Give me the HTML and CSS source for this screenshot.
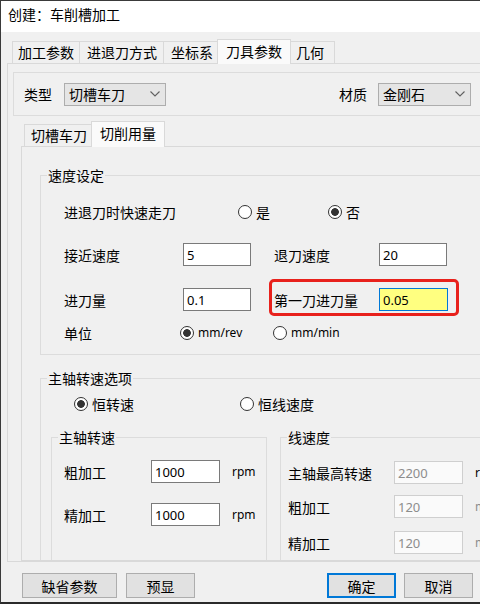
FILE: index.html
```html
<!DOCTYPE html>
<html lang="zh-CN">
<head>
  <meta charset="UTF-8" />
  <meta name="viewport" content="width=device-width, initial-scale=1.0"/>
  <title>创建：车削槽加工</title>
  <link rel="stylesheet" href="styles.css">
</head>
<body>

  <div class="window">
    <div class="titlebar">创建：车削槽加工</div>

    <div class="client">

      <!-- 主选项卡 -->
      <div class="tabs main-tabs">
        <div class="tab">加工参数</div>
        <div class="tab wide-tab">进退刀方式</div>
        <div class="tab wide-tab">坐标系</div>
        <div class="tab active">刀具参数</div>
        <div class="tab last">几何</div>
      </div>

      <div class="tabpage">

        <div class="toolrow">
          <span class="lbl type-lbl">类型</span>
          <div class="combo type-combo">
            <span>切槽车刀</span>
            <svg width="10" height="6" viewBox="0 0 10 6"><path d="M0.5 0.5 L5 5 L9.5 0.5" fill="none" stroke="#606060" stroke-width="1.1"/></svg>
          </div>
          <span class="lbl mat-lbl">材质</span>
          <div class="combo mat-combo">
            <span>金刚石</span>
            <svg width="10" height="6" viewBox="0 0 10 6"><path d="M0.5 0.5 L5 5 L9.5 0.5" fill="none" stroke="#606060" stroke-width="1.1"/></svg>
          </div>
        </div>

        <!-- 刀具子选项卡 -->
        <div class="tabs sub-tabs">
          <div class="tab">切槽车刀</div>
          <div class="tab active">切削用量</div>
        </div>

        <div class="subpage">

          <fieldset class="group speed">
            <legend>速度设定</legend>
            <div class="row quick">
              <span class="cell quick-lbl">进退刀时快速走刀</span>
              <label class="radio yes"><i></i>是</label>
              <label class="radio on"><i></i>否</label>
            </div>
            <div class="row feed">
              <span class="cell c1">接近速度</span>
              <input class="edit" type="text" value="5">
              <span class="cell c3">退刀速度</span>
              <input class="edit" type="text" value="20">
            </div>
            <div class="row feed second">
              <span class="cell c1">进刀量</span>
              <input class="edit" type="text" value="0.1">
              <span class="mark">
                <span class="cell c3">第一刀进刀量</span>
                <input class="edit focus" type="text" value="0.05">
              </span>
            </div>
            <div class="row unit">
              <span class="cell c1">单位</span>
              <label class="radio on rev"><i></i>mm/rev</label>
              <label class="radio"><i></i>mm/min</label>
            </div>
          </fieldset>

          <fieldset class="group spindle">
            <legend>主轴转速选项</legend>
            <div class="row mode">
              <label class="radio on const-rpm"><i></i>恒转速</label>
              <label class="radio"><i></i>恒线速度</label>
            </div>

            <div class="subgroups">
              <fieldset class="group rpm">
                <legend>主轴转速</legend>
                <div class="row">
                  <span class="cell">粗加工</span>
                  <input class="edit" type="text" value="1000">
                  <span class="unit-txt">rpm</span>
                </div>
                <div class="row fine">
                  <span class="cell">精加工</span>
                  <input class="edit" type="text" value="1000">
                  <span class="unit-txt">rpm</span>
                </div>
              </fieldset>

              <fieldset class="group vc">
                <legend>线速度</legend>
                <div class="row">
                  <span class="cell">主轴最高转速</span>
                  <input class="edit" type="text" value="2200" disabled>
                  <span class="unit-txt">rpm</span>
                </div>
                <div class="row r2">
                  <span class="cell">粗加工</span>
                  <input class="edit" type="text" value="120" disabled>
                  <span class="unit-txt dim">m/min</span>
                </div>
                <div class="row r3">
                  <span class="cell">精加工</span>
                  <input class="edit" type="text" value="120" disabled>
                  <span class="unit-txt dim">m/min</span>
                </div>
              </fieldset>
            </div>
          </fieldset>

        </div>
      </div>

      <div class="buttons">
        <button class="btn wide">缺省参数</button>
        <button class="btn preview">预显</button>
        <button class="btn ok">确定</button>
        <button class="btn cancel">取消</button>
      </div>

    </div>
  </div>

</body>
</html>
```

FILE: styles.css
```css
html, body {
  margin: 0;
  height: 100%;
  overflow: hidden;
  background-color: #f0f0f0;
}

body {
  font-family: "Noto Sans CJK SC", "Microsoft YaHei", sans-serif;
  font-size: 14px;
  color: #000;
}

.window {
  width: 520px;
  height: 604px;
  box-sizing: border-box;
  border-top: 1px solid #3a3a3a;
  border-left: 1px solid #3a3a3a;
  border-bottom: 2px solid #2a2a2a;
  background-color: #f0f0f0;
  display: flex;
  flex-direction: column;
}

.titlebar {
  height: 31px;
  line-height: 27px;
  padding-left: 7px;
  background-color: #fff;
}

.client {
  padding-left: 6px;
}

/* 选项卡 */
.tabs {
  display: flex;
  align-items: flex-end;
}

.main-tabs {
  height: 31px;
  padding-left: 5px;
}

.tab {
  height: 22px;
  line-height: 21px;
  padding: 0 5px;
  box-sizing: border-box;
  border: 1px solid #d9d9d9;
  border-bottom: none;
  margin-right: -1px;
  background-color: #f0f0f0;
  position: relative;
  flex: none;
}

.tab.wide-tab {
  padding: 0 6px 0 7px;
}

.tab.active {
  height: 25px;
  line-height: 22px;
  margin: 0 -1px -1px -2px;
  padding: 0 8px;
  background-color: #fafafa;
  z-index: 1;
}

.tab.last {
  padding-right: 10px;
}

.tabpage {
  border: 1px solid #d9d9d9;
  background-color: #f0f0f0;
}

.toolrow {
  margin: 8px 0 0 5px;
  height: 44px;
  box-sizing: border-box;
  border: 1px solid #dcdcdc;
  display: flex;
  align-items: center;
  padding-left: 10px;
}

.lbl {
  line-height: 20px;
}

.type-lbl {
  width: 40px;
}

.mat-lbl {
  width: 39px;
  margin-left: 173px;
}

.combo {
  height: 23px;
  box-sizing: border-box;
  border: 1px solid #adadad;
  background-color: #e5e5e5;
  display: flex;
  align-items: center;
  justify-content: space-between;
  padding: 0 5px 0 4px;
  line-height: 20px;
}

.type-combo {
  width: 102px;
}

.mat-combo {
  width: 93px;
}

.sub-tabs {
  margin: 6px 0 0 16px;
  height: 24px;
}

.sub-tabs .tab {
  padding: 0 6px;
}

.sub-tabs .tab.active {
  height: 26px;
  padding: 0 8px;
}

.subpage {
  margin-left: 13px;
  height: 415px;
  box-sizing: border-box;
  border: 1px solid #d9d9d9;
  overflow: hidden;
}

/* 分组框 */
.group {
  margin: 0;
  padding: 0;
  border: 1px solid #dcdcdc;
  min-inline-size: 0;
}

.group legend {
  padding: 0 1px;
  margin-left: 6px;
  line-height: 18px;
}

.speed {
  margin: 19px 10px 0 18px;
  padding-bottom: 11px;
}

.speed .row {
  margin-left: 23px;
}

.spindle {
  margin: 14px 10px 0 18px;
  height: 240px;
}

.row {
  display: flex;
  align-items: center;
}

.row > * {
  flex: none;
}

.cell {
  line-height: 20px;
  white-space: nowrap;
}

.quick {
  margin-top: 16px;
  height: 24px;
}

.quick-lbl {
  width: 174px;
}

.feed {
  margin-top: 19px;
  height: 23px;
}

.feed.second {
  margin-top: 22px;
}

.c1 {
  width: 119px;
}

.c3 {
  width: 105px;
  margin-left: 23px;
}

.unit {
  margin-top: 12px;
  height: 20px;
}

.unit .c1 {
  width: 116px;
}

.rev {
  width: 93px;
}

/* 提示框 */
.mark {
  display: flex;
  align-items: center;
  margin-left: 23px;
  position: relative;
}

.mark .c3 {
  margin-left: 0;
}

.mark::after {
  content: "";
  position: absolute;
  top: -9px;
  left: -5px;
  right: -11px;
  bottom: -5px;
  border: 3px solid #e8211c;
  border-radius: 5px;
}

.edit {
  width: 68px;
  height: 23px;
  box-sizing: border-box;
  margin: 0;
  border: 1px solid #7a7a7a;
  background-color: #fff;
  padding: 0 3px;
  font-family: "Noto Sans", "Open Sans", sans-serif;
  font-size: 13px;
  color: #000;
  outline: none;
}

.edit.focus {
  width: 69px;
  border-color: #0078d7;
  background-color: #ffff80;
}

.edit:disabled {
  border-color: #cfcfcf;
  background-color: #fafafa;
  color: #8d8d8d;
}

/* 单选按钮 */
.radio {
  display: flex;
  align-items: center;
  line-height: 20px;
  white-space: nowrap;
}

.radio i {
  width: 14px;
  height: 14px;
  box-sizing: border-box;
  border: 1px solid #333;
  border-radius: 50%;
  background-color: #fff;
  margin-right: 4px;
}

.radio.on i {
  background: radial-gradient(circle, #333 0 3.5px, #fff 4.2px);
}

.yes {
  width: 90px;
}

.unit .radio {
  font-family: "Noto Sans", "Open Sans", sans-serif;
  font-size: 12px;
}

.mode {
  margin-top: 7px;
  height: 20px;
  padding-left: 33px;
}

.const-rpm {
  width: 166px;
}

.subgroups {
  display: flex;
  margin-top: 14px;
}

.rpm {
  margin-left: 10px;
  width: 216px;
  height: 200px;
  box-sizing: border-box;
}

.rpm .row {
  margin: 14px 0 0 12px;
  height: 23px;
}

.rpm .row.fine {
  margin-top: 20px;
}

.rpm .cell {
  width: 87px;
}

.vc {
  margin-left: 13px;
  flex: 1;
  height: 200px;
}

.vc .row {
  margin: 15px 0 0 7px;
  height: 23px;
}

.vc .row.r2 {
  margin-top: 11px;
}

.vc .row.r3 {
  margin-top: 13px;
}

.vc .cell {
  width: 106px;
}

.rpm .edit,
.vc .edit {
  width: 69px;
}

.unit-txt {
  margin-left: 12px;
  font-family: "Noto Sans", "Open Sans", sans-serif;
  font-size: 12px;
}

.unit-txt.dim {
  color: #8d8d8d;
}

/* 底部按钮 */
.buttons {
  display: flex;
  margin-top: 11px;
  padding-left: 15px;
}

.btn {
  height: 25px;
  width: 69px;
  margin: 0;
  padding: 0;
  border: 1px solid #adadad;
  background-color: #e1e1e1;
  font-family: inherit;
  font-size: 14px;
  color: #000;
}

.btn.wide {
  width: 95px;
}

.btn.preview {
  margin-left: 9px;
}

.btn.ok {
  margin-left: 132px;
  border-color: #0078d7;
  box-shadow: inset 0 0 0 1px #0078d7;
}

.btn.cancel {
  margin-left: 8px;
}
```
